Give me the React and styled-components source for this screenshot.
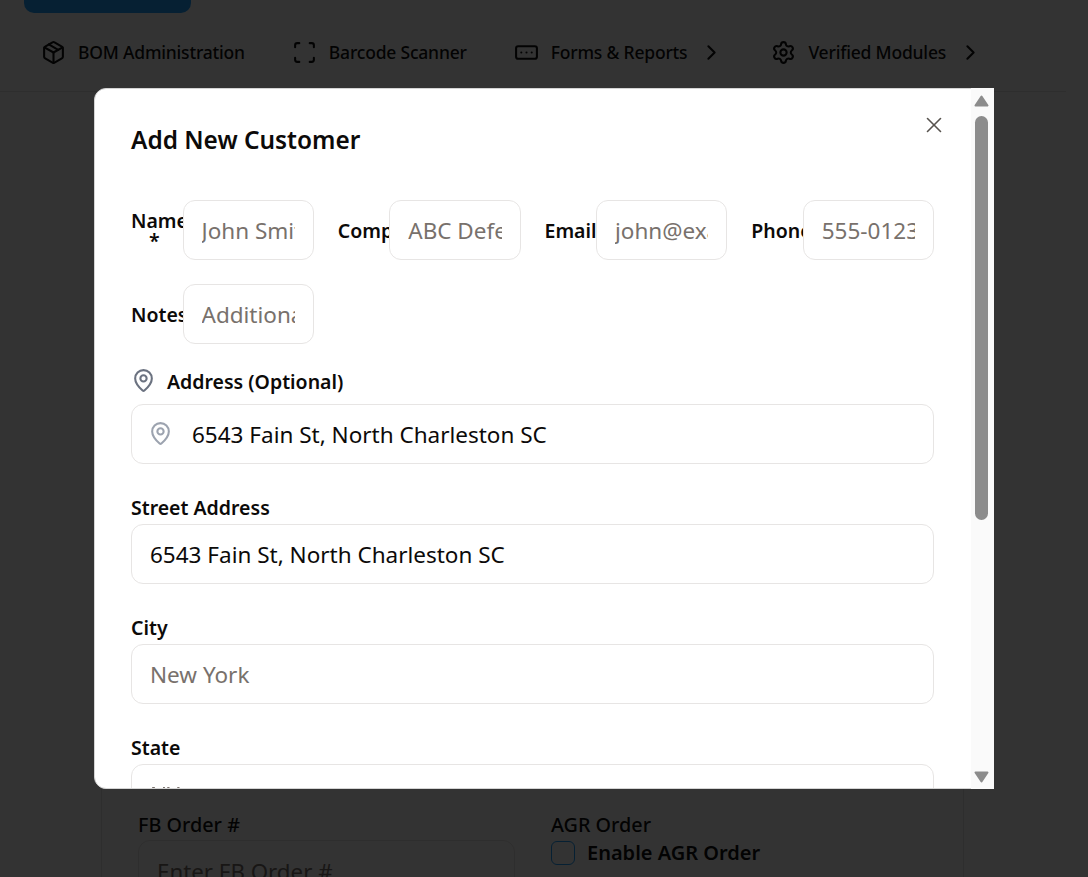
import React from 'react';
import styled, { createGlobalStyle } from 'styled-components';
import { ChevronRight, MapPin, Package, RectangleEllipsis, Scan, Settings, X } from 'lucide-react';

const FONT = '"Noto Sans", "Open Sans", sans-serif';

const GlobalStyle = createGlobalStyle`
  * {
    box-sizing: border-box;
  }
  html,
  body {
    margin: 0;
    height: 100%;
    overflow: hidden;
    background: #fff;
    font-family: ${FONT};
  }
`;

const navItems = [
  { label: 'BOM Administration', icon: Package },
  { label: 'Barcode Scanner', icon: Scan },
  { label: 'Forms & Reports', icon: RectangleEllipsis, more: true },
  { label: 'Verified Modules', icon: Settings, more: true },
];

const headRow = [
  { label: 'Name *', placeholder: 'John Smith' },
  { label: 'Company', placeholder: 'ABC Defense' },
  { label: 'Email', placeholder: 'john@example.com' },
  { label: 'Phone', placeholder: '555-0123' },
  { label: 'Notes', placeholder: 'Additional notes' },
];

const App = () => {
  return (
    <>
      <GlobalStyle />
      <Page>
        <Header>
          <TopButton />
          <Nav>
            {navItems.map((item) => (
              <NavItem key={item.label}>
                <item.icon size={25} strokeWidth={2} />
                <span>{item.label}</span>
                {item.more && <ChevronRight size={25} strokeWidth={2} />}
              </NavItem>
            ))}
          </Nav>
        </Header>
        <Card>
          <CardGrid>
            <div>
              <CardLabel>FB Order #</CardLabel>
              <CardInput placeholder="Enter FB Order #" readOnly />
            </div>
            <div>
              <CardLabel>AGR Order</CardLabel>
              <CheckRow>
                <CheckBox />
                <span>Enable AGR Order</span>
              </CheckRow>
            </div>
          </CardGrid>
        </Card>
      </Page>

      <Overlay>
        <Modal>
          <Body>
            <Title>Add New Customer</Title>
            <CloseButton>
              <X size={26} strokeWidth={1.5} />
            </CloseButton>
            <ShortGrid>
              {headRow.map((field) => (
                <ShortField key={field.label}>
                  <ShortLabel>{field.label}</ShortLabel>
                  <TextInput placeholder={field.placeholder} readOnly />
                </ShortField>
              ))}
            </ShortGrid>
            <AddressHead>
              <MapPin size={25} strokeWidth={2} />
              <FieldLabel>Address (Optional)</FieldLabel>
            </AddressHead>
            <SearchWrap>
              <SearchIcon size={25} strokeWidth={2} />
              <SearchInput value="6543 Fain St, North Charleston SC" readOnly />
            </SearchWrap>
            <Field>
              <FieldLabel>Street Address</FieldLabel>
              <TextInput value="6543 Fain St, North Charleston SC" readOnly />
            </Field>
            <Field>
              <FieldLabel>City</FieldLabel>
              <TextInput placeholder="New York" readOnly />
            </Field>
            <Field>
              <FieldLabel>State</FieldLabel>
              <TextInput placeholder="NY" readOnly />
            </Field>
          </Body>
          {/* headless chrome hides real scrollbars, so this one is drawn */}
          <ScrollRail>
            <RailButton>
              <svg width="15" height="12" viewBox="0 0 15 12">
                <path d="M7.5 1.5 13.5 10.5H1.5z" fill="#8c8c8c" stroke="#8c8c8c" strokeWidth="2" strokeLinejoin="round" />
              </svg>
            </RailButton>
            <RailThumb />
            <RailButton $bottom>
              <svg width="15" height="12" viewBox="0 0 15 12">
                <path d="M7.5 10.5 13.5 1.5H1.5z" fill="#8c8c8c" stroke="#8c8c8c" strokeWidth="2" strokeLinejoin="round" />
              </svg>
            </RailButton>
          </ScrollRail>
        </Modal>
      </Overlay>
    </>
  );
};

const Page = styled.div`
  width: 1066px;
  height: 877px;
  overflow: hidden;
`;

const Header = styled.header`
  height: 92px;
  padding: 0 24px;
  border-bottom: 1px solid #e5e5e5;
`;

const TopButton = styled.div`
  width: 167px;
  height: 13px;
  background: #1e9fff;
  border-radius: 0 0 10px 10px;
`;

const Nav = styled.nav`
  display: flex;
  align-items: center;
  gap: 47px;
  height: 78px;
  padding-left: 17px;
`;

const NavItem = styled.div`
  display: flex;
  align-items: center;
  gap: 12px;
  font-size: 17.5px;
  font-weight: 500;
  letter-spacing: -0.2px;
  color: #111;
`;

const Card = styled.main`
  width: 863px;
  height: 800px;
  margin: 24px 0 0 101px;
  padding: 694px 37px 0 36px;
  border: 1px solid #e5e5e5;
`;

const CardGrid = styled.div`
  display: grid;
  grid-template-columns: 377px 1fr;
  gap: 36px;
`;

const CardLabel = styled.div`
  font-size: 19.8px;
  font-weight: 500;
  line-height: 28px;
  color: #111;
`;

const CardInput = styled.input`
  width: 100%;
  height: 60px;
  margin-top: 1px;
  padding: 2px 18px 0;
  border: 1px solid #e7e5e4;
  border-radius: 12px;
  font-family: ${FONT};
  font-size: 22.3px;
  &::placeholder {
    color: #78716c;
  }
`;

const CheckRow = styled.div`
  display: flex;
  align-items: center;
  gap: 12px;
  font-size: 20px;
  font-weight: 600;
  color: #111;
`;

const CheckBox = styled.div`
  width: 24px;
  height: 24px;
  border: 1px solid #1e9fff;
  border-radius: 6px;
`;

const Overlay = styled.div`
  position: fixed;
  inset: 0;
  display: flex;
  align-items: center;
  justify-content: center;
  background: rgba(0, 0, 0, 0.8);
`;

const Modal = styled.div`
  display: flex;
  width: 900px;
  height: 80vh;
  background: #fff;
  border: 1px solid #d4d4d4;
  border-radius: 12px;
`;

const Body = styled.div`
  position: relative;
  flex: 1;
  min-width: 0;
  overflow: hidden;
  padding: 36px 37px 0 36px;
  border-radius: 12px 0 0 12px;
`;

const ScrollRail = styled.div`
  display: flex;
  flex-direction: column;
  align-items: center;
  flex: 0 0 23px;
  margin: -1px -1px -1px 0;
  padding-right: 2px;
  background: #fafafa;
`;

const RailButton = styled.div`
  display: flex;
  justify-content: center;
  align-items: ${(props) => (props.$bottom ? 'flex-end' : 'flex-start')};
  width: 100%;
  height: 28px;
  margin-top: ${(props) => (props.$bottom ? 'auto' : '0')};
  padding: 7px 0 6px;
`;

const RailThumb = styled.div`
  width: 13px;
  height: 404px;
  background: #8c8c8c;
  border-radius: 7px;
`;

const Title = styled.h2`
  margin: 0 0 45px;
  font-size: 24.4px;
  line-height: 30px;
  font-weight: 600;
  color: #0c0a09;
`;

const CloseButton = styled.button`
  position: absolute;
  top: 23px;
  right: 24px;
  display: flex;
  padding: 0;
  border: none;
  background: none;
  color: #57534e;
`;

const ShortGrid = styled.div`
  display: grid;
  grid-template-columns: repeat(4, 1fr);
  gap: 24px;
`;

const ShortField = styled.div`
  display: flex;
  align-items: center;
  min-width: 0;
`;

const ShortLabel = styled.label`
  flex: 0 0 51.5px;
  width: 51.5px;
  padding: 3px 5px 0 0;
  font-size: 19.5px;
  font-weight: 600;
  line-height: 20px;
  text-align: center;
  color: #0c0a09;
`;

const TextInput = styled.input`
  display: block;
  flex: 1;
  width: 100%;
  min-width: 0;
  height: 60px;
  padding: 2px 18px 0;
  background: #fff;
  border: 1px solid #e7e5e4;
  border-radius: 12px;
  outline: none;
  font-family: ${FONT};
  font-size: 22.5px;
  color: #0c0a09;
  &::placeholder {
    color: #78716c;
  }
`;

const AddressHead = styled.div`
  display: flex;
  align-items: center;
  gap: 11px;
  margin: 24px 0 8px;
  color: #6b7280;
  svg {
    margin-top: -3px;
  }
`;

const FieldLabel = styled.label`
  display: block;
  font-size: 19.5px;
  font-weight: 600;
  line-height: 28px;
  color: #0c0a09;
`;

const SearchWrap = styled.div`
  position: relative;
`;

const SearchIcon = styled(MapPin)`
  position: absolute;
  left: 17px;
  top: 17px;
  color: #9ca3af;
`;

const SearchInput = styled(TextInput)`
  padding-left: 60px;
`;

const Field = styled.div`
  margin-top: 30px;
  ${FieldLabel} {
    margin-bottom: 2px;
  }
`;

export default App;
